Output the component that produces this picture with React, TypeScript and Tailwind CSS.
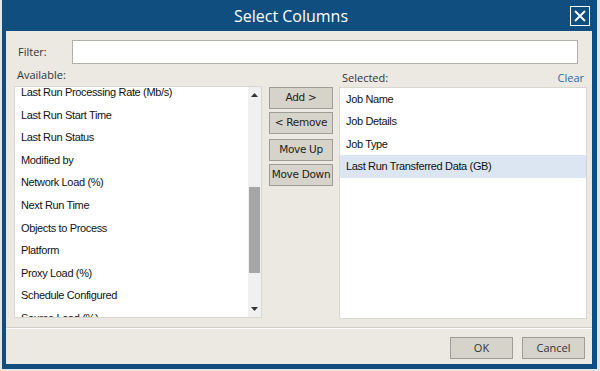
import React from "react";

const available = [
  "Last Run Processing Rate (Mb/s)",
  "Last Run Start Time",
  "Last Run Status",
  "Modified by",
  "Network Load (%)",
  "Next Run Time",
  "Objects to Process",
  "Platform",
  "Proxy Load (%)",
  "Schedule Configured",
  "Source Load (%)",
];

const selected = ["Job Name", "Job Details", "Job Type", "Last Run Transferred Data (GB)"];

function SideButton({ children, extra = "" }: { children: React.ReactNode; extra?: string }) {
  return (
    <div
      className={
        "h-[22px] w-[64px] flex items-center justify-center bg-[#d5d3ca] border border-[#9e9c94] text-[10.5px] text-[#222] font-['DejaVu_Sans',sans-serif] tracking-[-0.3px] " +
        extra
      }
    >
      {children}
    </div>
  );
}

function FooterButton({ children }: { children: React.ReactNode }) {
  return (
    <div className="h-[22px] w-[63px] flex items-center justify-center bg-[#d5d3ca] border border-[#9e9c94] text-[11px] text-[#333] font-['Open_Sans',sans-serif]">
      {children}
    </div>
  );
}

export default function App() {
  return (
    <div className="w-[600px] h-[371px] bg-[#e6e6e6] overflow-hidden">
      <div className="ml-[2px] w-[595px] h-[369px] bg-[#0f4e7e] flex flex-col">
        <div className="h-[31px] flex items-center shrink-0">
          <div className="flex-1 text-center pl-[10px] text-white text-[16px] font-['Open_Sans',sans-serif]">
            Select Columns
          </div>
          <div className="w-[20px] h-[20px] border border-white mr-[7px] mt-[1px] flex items-center justify-center">
            <svg width="14" height="14" viewBox="0 0 14 14">
              <path d="M2 2 L12 12 M12 2 L2 12" stroke="white" strokeWidth="1.8" />
            </svg>
          </div>
        </div>
        <div className="ml-[4px] mr-[5px] h-[333px] bg-[#ece9e2] flex flex-col">
          <div className="flex items-center mt-[9px] h-[24px]">
            <div className="pl-[12px] w-[66px] text-[11px] text-[#333] font-['Open_Sans',sans-serif]">
              Filter:
            </div>
            <div className="w-[506px] h-[24px] bg-white border border-[#b0aea8]"></div>
          </div>
          <div className="flex">
            <div className="flex flex-col">
              <div className="pl-[11px] h-[22px] flex items-center text-[11px] text-[#333] font-['Open_Sans',sans-serif]">
                Available:
              </div>
              <div className="ml-[8px] w-[248px] h-[232px] bg-white border border-[#d8d6d0] flex overflow-hidden">
                <div className="flex-1 overflow-hidden">
                  <div className="-mt-[6px]">
                    {available.map((t) => (
                      <div
                        key={t}
                        className="h-[22.6px] flex items-center pl-[6px] text-[11px] tracking-[-0.35px] text-[#111] font-['Liberation_Sans',Arial,sans-serif]"
                      >
                        {t}
                      </div>
                    ))}
                  </div>
                </div>
                <div className="w-[13px] bg-[#f0f0f0] flex flex-col items-center">
                  <div className="h-[16px] flex items-center justify-center">
                    <svg width="7" height="4" viewBox="0 0 7 4">
                      <path d="M0 4 L3.5 0 L7 4 Z" fill="#333" />
                    </svg>
                  </div>
                  <div className="h-[84px]"></div>
                  <div className="w-[11px] h-[86px] bg-[#a6a6a6]"></div>
                  <div className="flex-1"></div>
                  <div className="h-[16px] flex items-center justify-center">
                    <svg width="7" height="4" viewBox="0 0 7 4">
                      <path d="M0 0 L7 0 L3.5 4 Z" fill="#333" />
                    </svg>
                  </div>
                </div>
              </div>
            </div>
            <div className="ml-[7px] mt-[23px] flex flex-col gap-[3px]">
              <SideButton>Add &gt;</SideButton>
              <SideButton>&lt; Remove</SideButton>
              <SideButton extra="mt-[2px]">Move Up</SideButton>
              <SideButton>Move Down</SideButton>
            </div>
            <div className="ml-[6px] flex flex-col">
              <div className="h-[23px] flex items-center justify-between pr-[3px] pt-[5px]">
                <span className="pl-[3px] pt-[1px] text-[11px] text-[#333] font-['Open_Sans',sans-serif]">
                  Selected:
                </span>
                <span className="text-[11px] text-[#2b6aa6] font-['Open_Sans',sans-serif]">Clear</span>
              </div>
              <div className="w-[248px] h-[232px] bg-white border border-[#d8d6d0]">
                {selected.map((t, i) => (
                  <div
                    key={t}
                    className={
                      "h-[22.4px] flex items-center pl-[6px] text-[11px] tracking-[-0.35px] text-[#111] font-['Liberation_Sans',Arial,sans-serif] " +
                      (i === 3 ? "bg-[#dce6f3]" : "")
                    }
                  >
                    {t}
                  </div>
                ))}
              </div>
            </div>
          </div>
          <div className="mt-[8px] h-[1px] bg-[#d2d0c8]"></div>
          <div className="h-[1px] bg-white"></div>
          <div className="flex justify-end gap-[9px] pr-[7px] pt-[8px]">
            <FooterButton>OK</FooterButton>
            <FooterButton>Cancel</FooterButton>
          </div>
        </div>
      </div>
    </div>
  );
}
